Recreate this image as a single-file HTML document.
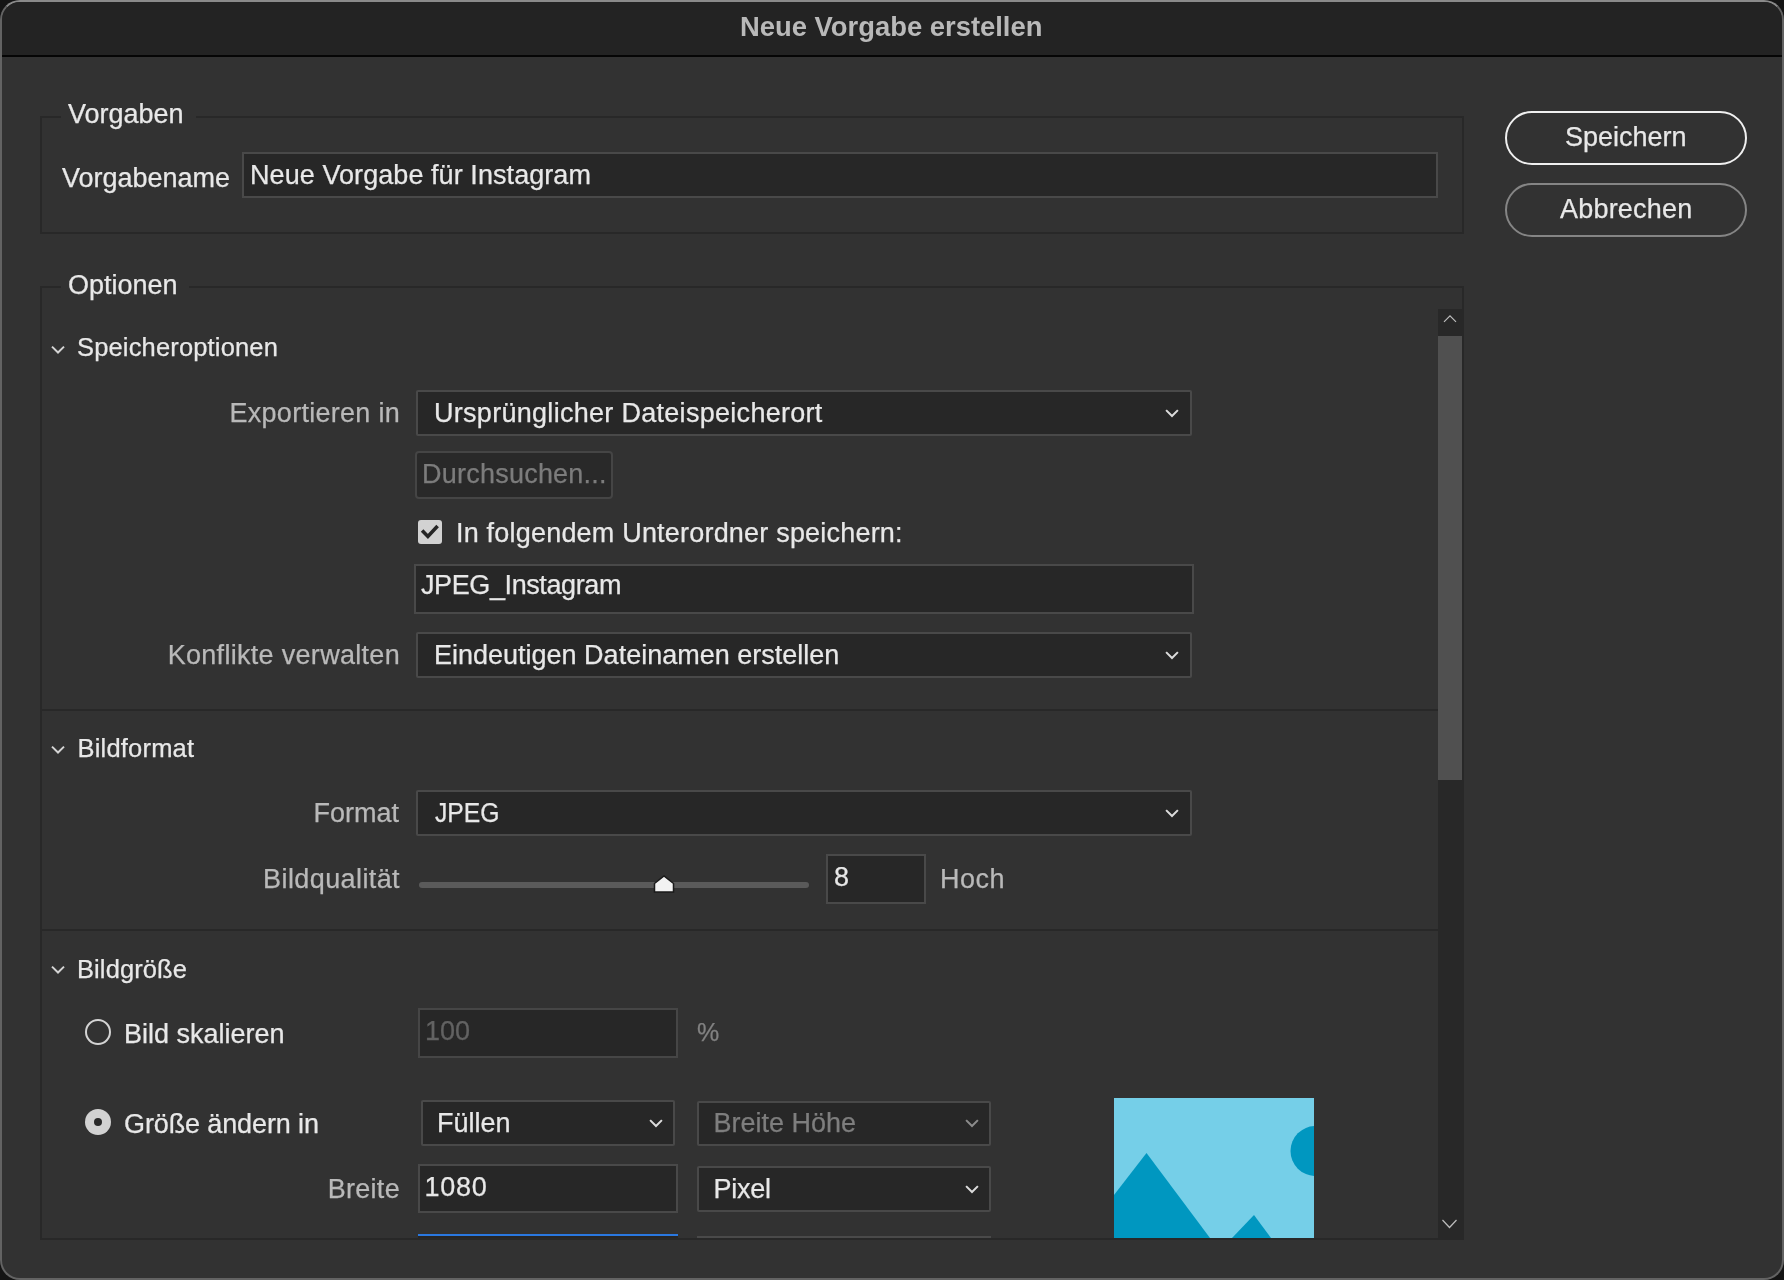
<!DOCTYPE html>
<html><head><meta charset="utf-8">
<style>
*{box-sizing:border-box;margin:0;padding:0}
html,body{width:1784px;height:1280px;overflow:hidden;background:#141414}
body{position:relative;font-family:"Liberation Sans",sans-serif}
.win{position:absolute;left:0;top:0;width:1784px;height:1280px;border-radius:20px;background:#323232;border:2px solid #636363;border-top-color:#8a8a8a;overflow:hidden}
.title{position:absolute;left:0;top:0;width:1780px;height:55px;background:#232323;border-bottom:2px solid #050505}
.a{position:absolute}
.t{position:absolute;white-space:nowrap;line-height:1;font-size:27px;color:#e8e8e8;-webkit-font-smoothing:antialiased;transform:translateZ(0);-webkit-text-stroke:0.25px currentColor}
.box{position:absolute;background:#272727;border:2px solid #494949;border-radius:2px}
.fs{position:absolute;border:2px solid #282828}
.gap{position:absolute;background:#323232;height:4px}
.sep{position:absolute;height:2px;background:#282828}
</style></head><body>
<div class="win"><div class="title"></div></div>
<div class="fs" style="left:40px;top:116px;width:1424px;height:118px"></div>
<div class="gap" style="left:61px;top:115px;width:135px"></div>
<div class="box" style="left:242px;top:152px;width:1196px;height:46px;border-radius:0"></div>
<div class="a" style="left:1505px;top:111px;width:242px;height:54px;border:2px solid #f0f0f0;border-radius:27px"></div>
<div class="a" style="left:1505px;top:183px;width:242px;height:54px;border:2px solid #858585;border-radius:27px"></div>
<div class="fs" style="left:40px;top:286px;width:1424px;height:954px"></div>
<div class="gap" style="left:61px;top:285px;width:128px"></div>
<div class="a" style="left:1438px;top:309px;width:25px;height:929px;background:#282828"></div>
<div class="a" style="left:1438px;top:336px;width:24px;height:444px;background:#505050"></div>
<svg class="a" style="left:1443px;top:314px" width="14" height="10"><path d="M1 7.8 L7 1.8 L13 7.8" fill="none" stroke="#bdbdbd" stroke-width="1.2"/></svg>
<svg class="a" style="left:1441px;top:1218px" width="18" height="12"><path d="M1.5 2 L8.5 9.5 L15.5 2" fill="none" stroke="#bdbdbd" stroke-width="1.2"/></svg>
<svg class="a" style="left:50px;top:343.5px" width="16" height="12"><path d="M2 2.6 L8 8.5 L14 2.6" fill="none" stroke="#d4d4d4" stroke-width="2"/></svg>
<div class="box" style="left:416px;top:390px;width:776px;height:46px;"></div>
<svg class="a" style="left:1163px;top:406.2px" width="18" height="14"><path d="M3.1 4.1 L9 10 L14.9 4.1" fill="none" stroke="#dcdcdc" stroke-width="2.0"/></svg>
<div class="box" style="left:415px;top:451px;width:198px;height:48px;background:#292929;border-color:#454545;border-radius:4px"></div>
<div class="a" style="left:418px;top:520px;width:24px;height:24px;background:#d2d2d2;border-radius:3px"></div>
<svg class="a" style="left:418px;top:520px" width="24" height="24"><path d="M4.1 10.6 L9.9 16.4 L19.6 6.1" fill="none" stroke="#262626" stroke-width="3.6"/></svg>
<div class="box" style="left:414px;top:564px;width:780px;height:50px;border-radius:0"></div>
<div class="box" style="left:416px;top:632px;width:776px;height:46px;"></div>
<svg class="a" style="left:1163px;top:648.2px" width="18" height="14"><path d="M3.1 4.1 L9 10 L14.9 4.1" fill="none" stroke="#dcdcdc" stroke-width="2.0"/></svg>
<div class="sep" style="left:42px;top:709px;width:1396px"></div>
<svg class="a" style="left:50px;top:743.5px" width="16" height="12"><path d="M2 2.6 L8 8.5 L14 2.6" fill="none" stroke="#d4d4d4" stroke-width="2"/></svg>
<div class="box" style="left:416px;top:790px;width:776px;height:46px;"></div>
<svg class="a" style="left:1163px;top:806.2px" width="18" height="14"><path d="M3.1 4.1 L9 10 L14.9 4.1" fill="none" stroke="#dcdcdc" stroke-width="2.0"/></svg>
<div class="a" style="left:419px;top:882px;width:390px;height:6px;background:#5a5a5a;border-radius:3px"></div>
<svg class="a" style="left:652px;top:874px" width="24" height="20"><path d="M2.5 9.5 L12 2 L21.5 9.5 L21.5 18 L2.5 18 Z" fill="#f2f2f2" stroke="#1a1a1a" stroke-width="1.5"/></svg>
<div class="box" style="left:826px;top:854px;width:100px;height:50px;border-radius:0"></div>
<div class="sep" style="left:42px;top:929px;width:1396px"></div>
<svg class="a" style="left:50px;top:963.5px" width="16" height="12"><path d="M2 2.6 L8 8.5 L14 2.6" fill="none" stroke="#d4d4d4" stroke-width="2"/></svg>
<div class="a" style="left:85px;top:1019px;width:26px;height:26px;border:2px solid #d4d4d4;border-radius:50%"></div>
<div class="box" style="left:418px;top:1008px;width:260px;height:50px;border-radius:0;border-color:#464646"></div>
<div class="a" style="left:85px;top:1109px;width:26px;height:26px;background:#d2d2d2;border-radius:50%"></div>
<div class="a" style="left:94px;top:1118px;width:8px;height:8px;background:#2a2a2a;border-radius:50%"></div>
<div class="box" style="left:421px;top:1100px;width:254px;height:46px;"></div>
<svg class="a" style="left:647px;top:1116px" width="18" height="14"><path d="M3.1 4.1 L9 10 L14.9 4.1" fill="none" stroke="#dcdcdc" stroke-width="2.0"/></svg>
<div class="box" style="left:697px;top:1101px;width:294px;height:45px;"></div>
<svg class="a" style="left:962.8px;top:1115.6px" width="18" height="14"><path d="M3.1 4.1 L9 10 L14.9 4.1" fill="none" stroke="#8c8c8c" stroke-width="2.0"/></svg>
<div class="box" style="left:418px;top:1164px;width:260px;height:49px;border-radius:0"></div>
<div class="box" style="left:697px;top:1166px;width:294px;height:46px;"></div>
<svg class="a" style="left:962.8px;top:1182px" width="18" height="14"><path d="M3.1 4.1 L9 10 L14.9 4.1" fill="none" stroke="#dcdcdc" stroke-width="2.0"/></svg>
<div class="a" style="left:418px;top:1234px;width:260px;height:4px;border-top:2px solid #2a78e0;background:#262626"></div>
<div class="a" style="left:697px;top:1236px;width:294px;height:2px;background:#4a4a4a"></div>
<svg class="a" style="left:1114px;top:1098px" width="200" height="140"><rect width="200" height="140" fill="#75cfe8"/><circle cx="201.5" cy="53" r="25" fill="#0097c0"/><path d="M0 97 L32.5 55 L96 140 L0 140 Z" fill="#0097c0"/><path d="M118 140 L140 117 L157 140 Z" fill="#0097c0"/></svg>
<div class="t" style="left:740px;top:12.5px;font-weight:bold;color:#b9b9b9;font-size:27.4px;-webkit-text-stroke:0">Neue Vorgabe erstellen</div>
<div class="t" style="left:68px;top:101px;">Vorgaben</div>
<div class="t" style="left:62px;top:165px;">Vorgabename</div>
<div class="t" style="left:250px;top:162px;letter-spacing:0.07px">Neue Vorgabe für Instagram</div>
<div class="t" style="left:1565px;top:124px;">Speichern</div>
<div class="t" style="left:1560px;top:196px;letter-spacing:0.2px">Abbrechen</div>
<div class="t" style="left:68px;top:272px;">Optionen</div>
<div class="t" style="left:77px;top:335px;font-size:25.5px;letter-spacing:0.16px">Speicheroptionen</div>
<div class="t" style="right:1384px;top:400px;color:#b9b9b9;letter-spacing:0.28px">Exportieren in</div>
<div class="t" style="left:434px;top:400px;letter-spacing:0.29px">Ursprünglicher Dateispeicherort</div>
<div class="t" style="left:422px;top:461px;color:#7c7c7c;letter-spacing:0.23px">Durchsuchen...</div>
<div class="t" style="left:456px;top:520px;letter-spacing:0.2px">In folgendem Unterordner speichern:</div>
<div class="t" style="left:421px;top:572px;letter-spacing:-0.4px">JPEG_Instagram</div>
<div class="t" style="right:1384px;top:642px;color:#b9b9b9;letter-spacing:0.3px">Konflikte verwalten</div>
<div class="t" style="left:434px;top:642px;">Eindeutigen Dateinamen erstellen</div>
<div class="t" style="left:77.5px;top:736px;font-size:25.5px;letter-spacing:0.2px">Bildformat</div>
<div class="t" style="right:1385px;top:800px;color:#b9b9b9;">Format</div>
<div class="t" style="left:434.5px;top:800px;transform:translateZ(0) scaleX(0.915);transform-origin:0 0">JPEG</div>
<div class="t" style="right:1384px;top:866px;color:#b9b9b9;letter-spacing:0.4px">Bildqualität</div>
<div class="t" style="left:834px;top:864px;">8</div>
<div class="t" style="left:940px;top:866px;color:#b9b9b9;letter-spacing:0.5px">Hoch</div>
<div class="t" style="left:77px;top:957px;font-size:25.5px;letter-spacing:0.1px">Bildgröße</div>
<div class="t" style="left:124px;top:1021px;">Bild skalieren</div>
<div class="t" style="left:425px;top:1018px;color:#626262">100</div>
<div class="t" style="left:697px;top:1020px;color:#828282;font-size:25px">%</div>
<div class="t" style="left:124px;top:1111px;letter-spacing:-0.12px">Größe ändern in</div>
<div class="t" style="left:437px;top:1110px;">Füllen</div>
<div class="t" style="left:713.5px;top:1110px;color:#7e7e7e">Breite Höhe</div>
<div class="t" style="right:1384px;top:1176px;color:#b9b9b9;letter-spacing:0.3px">Breite</div>
<div class="t" style="left:424.5px;top:1174px;letter-spacing:0.7px">1080</div>
<div class="t" style="left:713.5px;top:1176px;letter-spacing:-0.25px">Pixel</div>
</body></html>
